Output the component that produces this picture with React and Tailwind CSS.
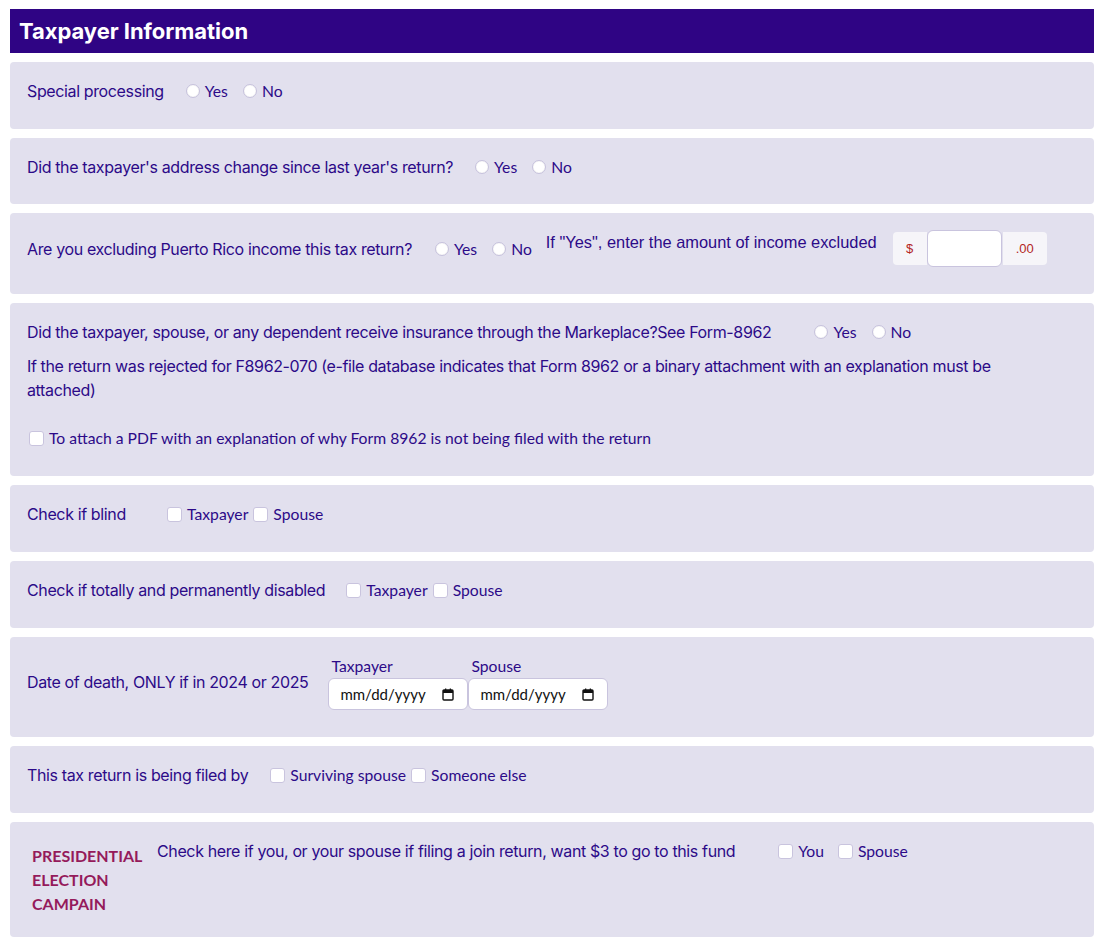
import React from "react";

const Q = "font-['Inter','Noto_Sans',sans-serif] text-[16px] leading-[24px] tracking-[-0.37px] text-[#2c0a88]";
const L = "font-['Lato','Noto_Sans',sans-serif] text-[15.7px] leading-[24px] text-[#2c0a88]";

function Radio({ label, className = "" }) {
  return (
    <label className={`flex items-center ${className}`}>
      <span className="w-[14px] h-[14px] rounded-full bg-white border border-[#c6c1dc] shadow-[inset_0_0_1px_rgba(0,0,0,0.15)]" />
      <span className={`${L} ml-[5px]`}>{label}</span>
    </label>
  );
}

function Check({ label, className = "" }) {
  return (
    <label className={`flex items-center ${className}`}>
      <span className="w-[15px] h-[15px] rounded-[3px] bg-white border border-[#c9c4de]" />
      <span className={`${L} ml-[5px]`}>{label}</span>
    </label>
  );
}

function Card({ children, className = "" }) {
  return (
    <div className={`bg-[#e2e0ee] rounded-[4px] px-[17px] ${className}`}>{children}</div>
  );
}

function DateBox() {
  return (
    <div className="w-[140px] h-[32px] bg-white border border-[#c9c4de] rounded-[6px] flex items-center justify-between pl-[11px] pr-[13px]">
      <span className="font-['Lato','Noto_Sans',sans-serif] text-[15px] text-[#111]">mm/dd/yyyy</span>
      <svg width="12" height="13" viewBox="0 0 12 13">
        <rect x="1" y="2" width="10" height="10" rx="1" fill="none" stroke="#111" strokeWidth="1.4" />
        <rect x="1" y="2" width="10" height="3" fill="#111" />
        <rect x="3" y="0.5" width="1.3" height="2.5" fill="#111" />
        <rect x="7.7" y="0.5" width="1.3" height="2.5" fill="#111" />
      </svg>
    </div>
  );
}

export default function App() {
  return (
    <div className="w-[1104px] min-h-[944px] bg-white px-[10px] pt-[9px] flex flex-col gap-[9px]">
      <div className="h-[44px] bg-[#2f0484] flex items-center px-[9px]">
        <h1 className="font-['Inter',sans-serif] font-bold text-[22px] tracking-[-0.05px] text-white">Taxpayer Information</h1>
      </div>

      <Card className="pt-[17px] pb-[26px]">
        <div className="flex items-center">
          <span className={Q}>Special processing</span>
          <Radio label="Yes" className="ml-[22px]" />
          <Radio label="No" className="ml-[15px]" />
        </div>
      </Card>

      <Card className="pt-[17px] pb-[25px]">
        <div className="flex items-center">
          <span className={Q}>Did the taxpayer's address change since last year's return?</span>
          <Radio label="Yes" className="ml-[22px]" />
          <Radio label="No" className="ml-[15px]" />
        </div>
      </Card>

      <Card className="pt-[17px] pb-[27px]">
        <div className="flex items-center h-[37px]">
          <span className={Q}>Are you excluding Puerto Rico income this tax return?</span>
          <Radio label="Yes" className="ml-[23px]" />
          <Radio label="No" className="ml-[15px]" />
          <span className="self-start font-['Liberation_Sans',Arial,sans-serif] text-[16.4px] leading-[24px] text-[#2c0a88] ml-[14px]">If "Yes", enter the amount of income excluded</span>
          <div className="flex items-center ml-[16px]">
            <div className="w-[34px] h-[33px] bg-[#f6f5f9] rounded-l-[4px] flex items-center justify-center font-['Liberation_Sans',Arial,sans-serif] text-[13px] text-[#b3261e]">$</div>
            <div className="w-[75px] h-[37px] bg-white border border-[#c9c4de] rounded-[6px]" />
            <div className="w-[44px] h-[33px] bg-[#f6f5f9] rounded-r-[4px] ml-[1px] flex items-center justify-center font-['Liberation_Sans',Arial,sans-serif] text-[13px] text-[#b3261e]">.00</div>
          </div>
        </div>
      </Card>

      <Card className="pt-[17px] pb-[26px]">
        <div className="flex items-center">
          <span className={Q}>Did the taxpayer, spouse, or any dependent receive insurance through the Markeplace?See Form-8962</span>
          <Radio label="Yes" className="ml-[43px]" />
          <Radio label="No" className="ml-[15px]" />
        </div>
        <p className={`${Q} mt-[10px] max-w-[990px]`}>
          If the return was rejected for F8962-070 (e-file database indicates that Form 8962 or a binary attachment with an explanation must be attached)
        </p>
        <Check label="To attach a PDF with an explanation of why Form 8962 is not being filed with the return" className="mt-[24px] ml-[2px]" />
      </Card>

      <Card className="pt-[17px] pb-[26px]">
        <div className="flex items-center">
          <span className={`${Q} w-[140px]`}>Check if blind</span>
          <Check label="Taxpayer" />
          <Check label="Spouse" className="ml-[5px]" />
        </div>
      </Card>

      <Card className="pt-[17px] pb-[26px]">
        <div className="flex items-center">
          <span className={Q}>Check if totally and permanently disabled</span>
          <Check label="Taxpayer" className="ml-[21px]" />
          <Check label="Spouse" className="ml-[5px]" />
        </div>
      </Card>

      <Card className="pt-[17px] pb-[27px]">
        <div className="flex items-center">
          <span className={Q}>Date of death, ONLY if in 2024 or 2025</span>
          <div className="flex ml-[20px]">
            <div className="flex flex-col">
              <span className={`${L} pl-[3px]`}>Taxpayer</span>
              <DateBox />
            </div>
            <div className="flex flex-col">
              <span className={`${L} pl-[3px]`}>Spouse</span>
              <DateBox />
            </div>
          </div>
        </div>
      </Card>

      <Card className="pt-[17px] pb-[26px]">
        <div className="flex items-center">
          <span className={Q}>This tax return is being filed by</span>
          <Check label="Surviving spouse" className="ml-[22px]" />
          <Check label="Someone else" className="ml-[5px]" />
        </div>
      </Card>

      <Card className="pt-[17px] pb-[16px] mb-[7px]">
        <div className="flex items-start">
          <div className="p-[5px] font-['Lato','Noto_Sans',sans-serif] font-bold text-[16px] leading-[24px] text-[#951a5b] w-[120px]">
            PRESIDENTIAL<br />ELECTION<br />CAMPAIN
          </div>
          <div className="flex items-center ml-[10px]">
            <span className={Q}>Check here if you, or your spouse if filing a join return, want $3 to go to this fund</span>
            <Check label="You" className="ml-[43px]" />
            <Check label="Spouse" className="ml-[14px]" />
          </div>
        </div>
      </Card>
    </div>
  );
}
